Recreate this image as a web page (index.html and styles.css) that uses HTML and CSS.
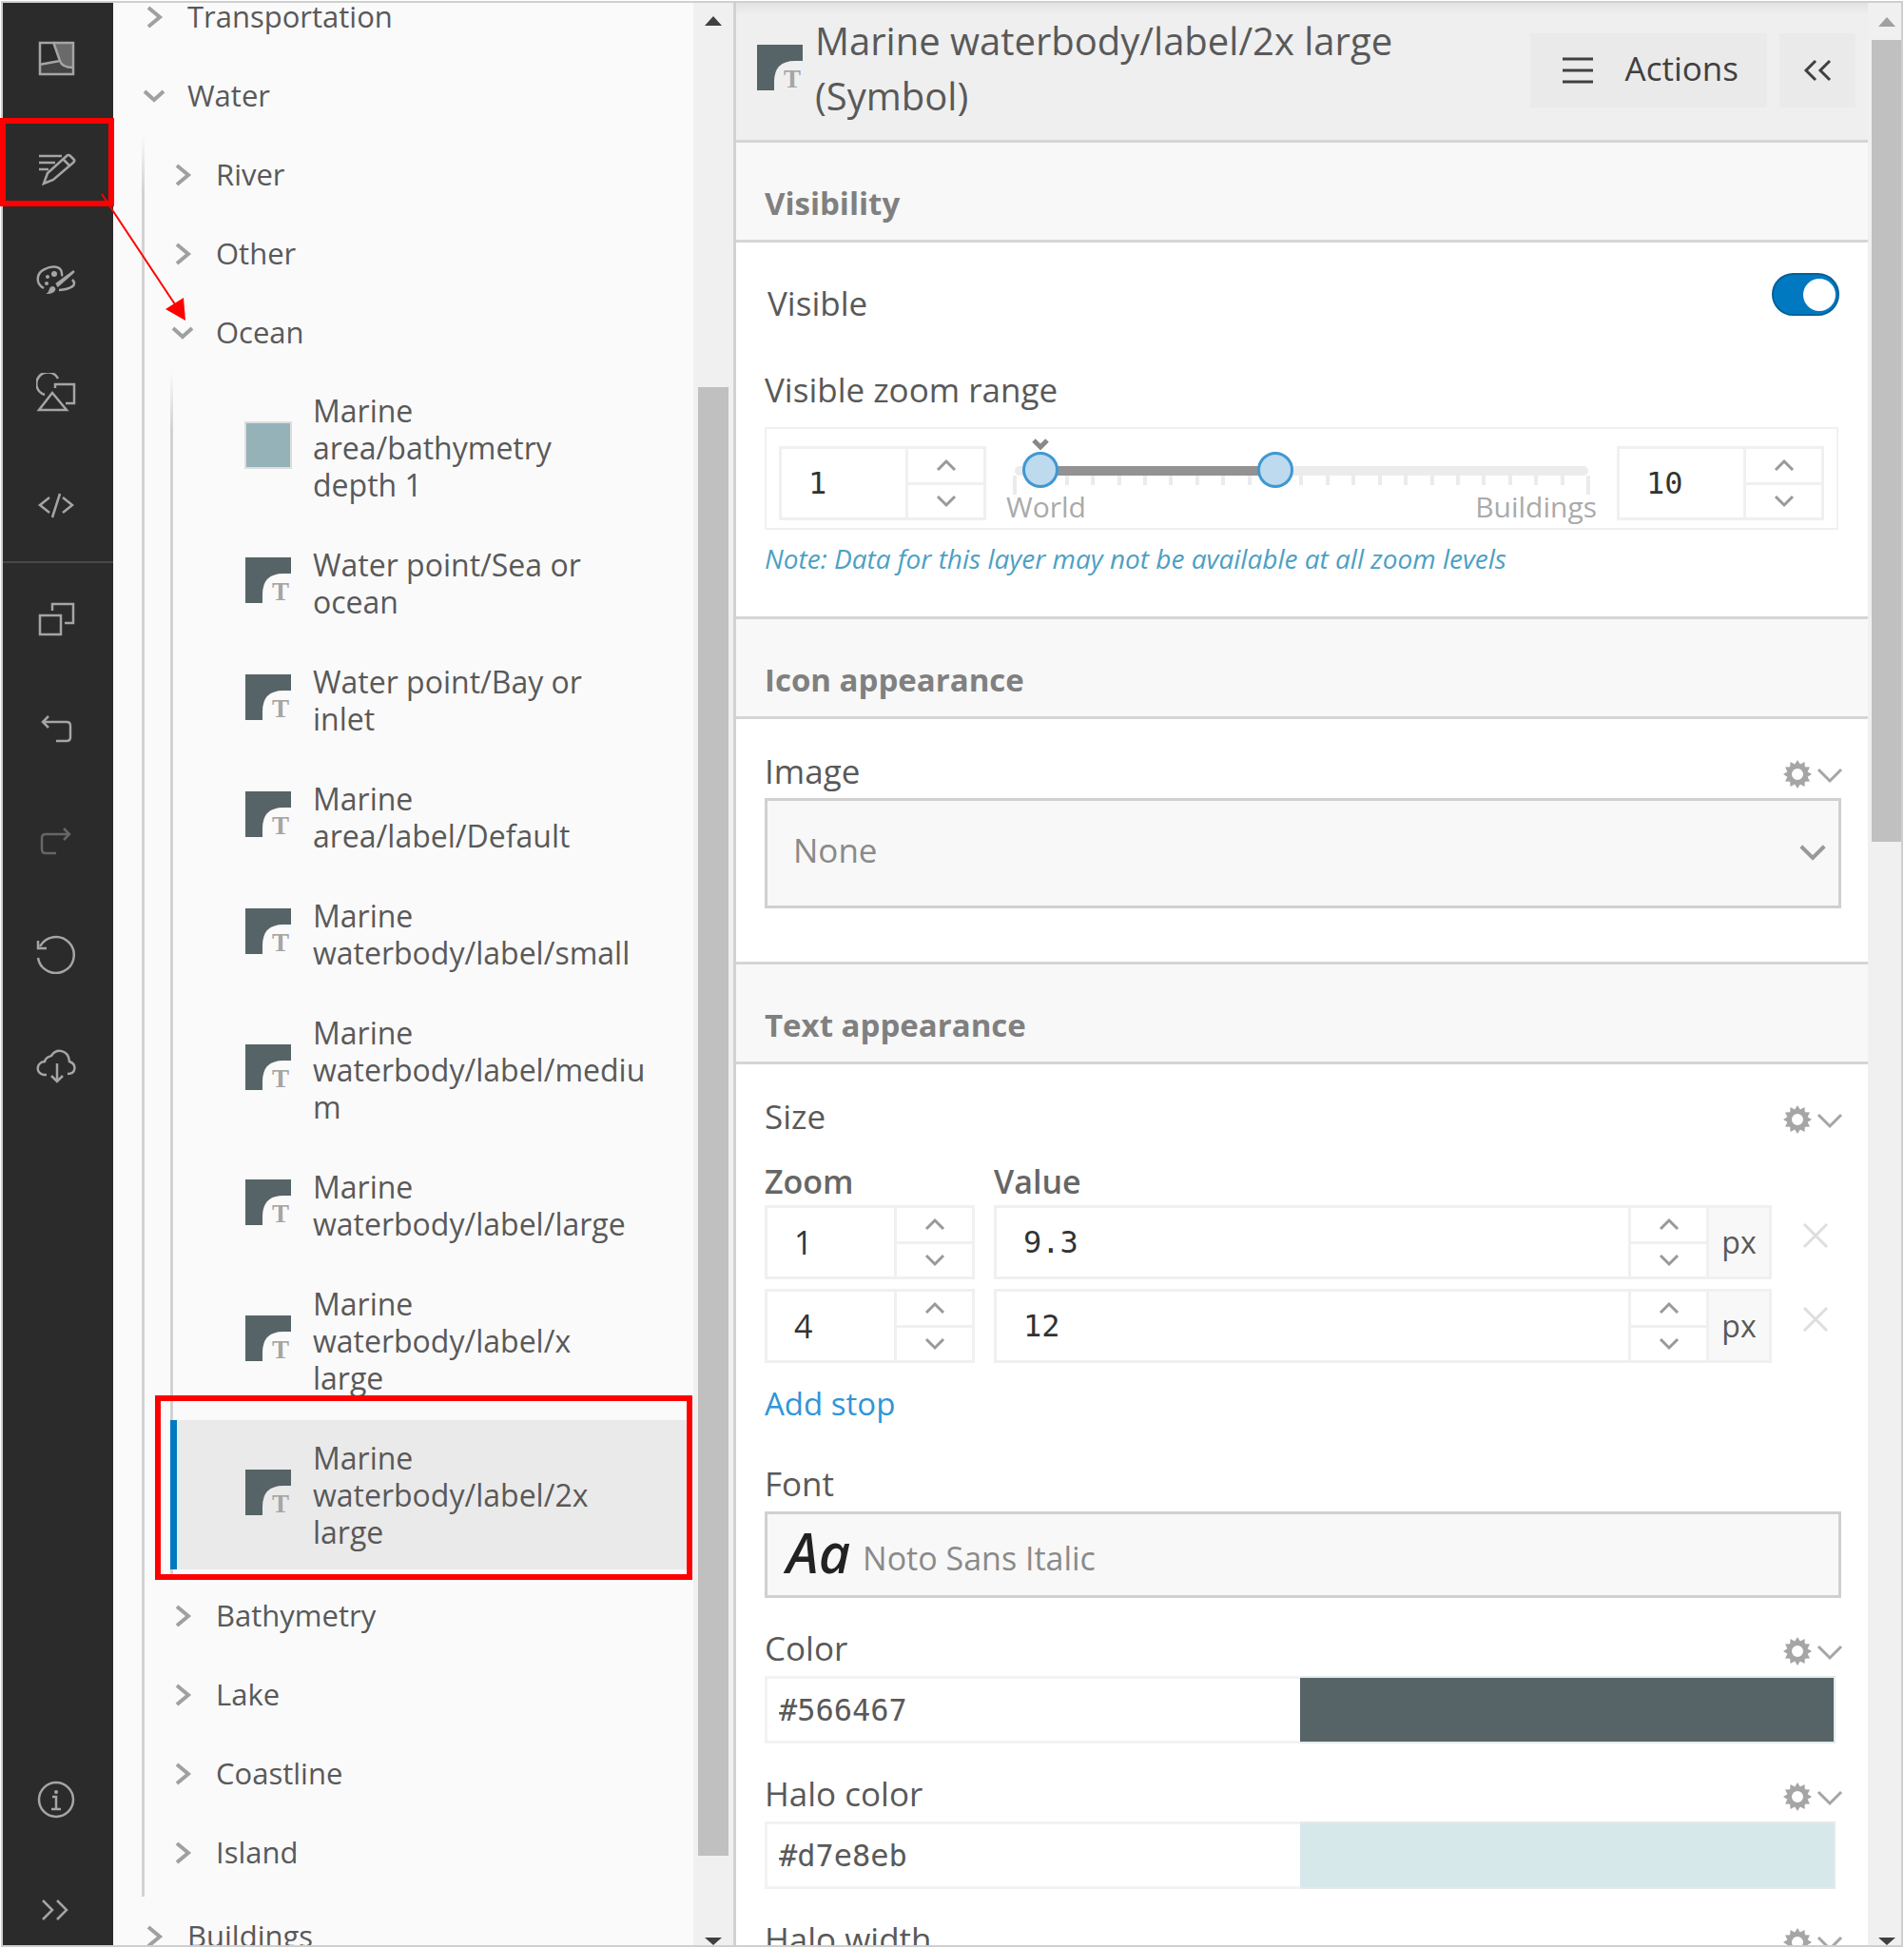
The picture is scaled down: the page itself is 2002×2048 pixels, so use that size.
FILE: index.html
```html
<!DOCTYPE html>
<html lang="en">
<head>
    <meta charset="UTF-8">
    <meta name="viewport" content="width=device-width, initial-scale=1.0">
    <title>Style Editor</title>
    <link rel="stylesheet" href="styles.css">
</head>
<body>

    <!-- Shared icons -->
    <svg class="sprite" aria-hidden="true">
        <symbol id="chev-right" viewBox="0 0 26 26"><path d="M7 3L19 13L7 23" fill="none" stroke="currentColor" stroke-width="4"/></symbol>
        <symbol id="chev-down" viewBox="0 0 26 26"><path d="M3 8L13 17L23 8" fill="none" stroke="currentColor" stroke-width="4"/></symbol>
        <symbol id="arrow-up" viewBox="0 0 22 14"><path d="M2 12L11 3L20 12" fill="none" stroke="currentColor" stroke-width="3"/></symbol>
        <symbol id="arrow-down" viewBox="0 0 22 14"><path d="M2 2L11 11L20 2" fill="none" stroke="currentColor" stroke-width="3"/></symbol>
        <symbol id="gear" viewBox="0 0 64 32">
            <path fill="currentColor" fill-rule="evenodd" d="M31 16L26.600 18.800L29 23.500L23.800 23.800L23.500 29L18.800 26.600L16 31L13.200 26.600L8.500 29L8.200 23.800L3 23.500L5.400 18.800L1 16L5.400 13.200L3 8.500L8.200 8.200L8.500 3L13.200 5.400L16 1L18.800 5.400L23.500 3L23.800 8.200L29 8.500L26.600 13.200ZM22 16A6 6 0 1 0 10 16A6 6 0 1 0 22 16Z"/>
            <path fill="none" stroke="currentColor" stroke-width="3" d="M38 11L50 23L62 11"/>
        </symbol>
        <symbol id="label-swatch" viewBox="0 0 50 50">
            <path fill="#566467" d="M1 1H49V18H41Q19 18 19 40V49H1Z"/>
            <text x="38" y="46" text-anchor="middle" class="swatch-letter">T</text>
        </symbol>
    </svg>

    <div class="app">
        <nav class="rail" aria-label="Editor tools">
            <button type="button" class="rail-btn" aria-label="Quick edit">
                <svg viewBox="0 0 42 42"><path d="M3 28L25 24L29 30L39 31V39H3Z" fill="#444" stroke="none"/><path d="M18 4H39V31L29 30L25 24Z" fill="#6a6a6a" stroke="none"/><path d="M3 28L25 24M18 4L25 24Q27 31 39 31"/><rect x="4" y="5" width="35" height="33"/></svg>
            </button>
            <button type="button" class="rail-btn" aria-label="Edit by layer">
                <svg viewBox="0 0 42 42"><path d="M3 8H27M3 15H20M3 22H13M8 37L12 26L32 8Q34 6 36 8L40 12Q41 13 39 15L18 33ZM28 11L35 18"/></svg>
            </button>
            <button type="button" class="rail-btn" aria-label="Colors">
                <svg viewBox="0 0 42 42"><path d="M8 29C-1 24 0 13 9 9C16 5 24 6 26 10C28 13 26 15 28 16M40 11L21 25M38 20C44 26 36 30 24 31M39 12L22 27"/><path d="M10 35C15 34 12 27 18 27C23 29 20 36 10 35Z" fill="#a5a5a5" stroke="none"/><g fill="#a5a5a5" stroke="none"><circle cx="12" cy="17" r="2"/><circle cx="19" cy="14" r="3"/><circle cx="11" cy="24" r="2"/></g></svg>
            </button>
            <button type="button" class="rail-btn" aria-label="Icons">
                <svg viewBox="0 0 42 42"><path d="M23 6A12 12 0 1 0 9 23M20 16V12H40V32H31M17 21L32 39H3Z"/></svg>
            </button>
            <button type="button" class="rail-btn" aria-label="Edit JSON">
                <svg viewBox="0 0 42 42"><path d="M14 13L4 21L14 29M28 13L38 21L28 29M25 9L17 34"/></svg>
            </button>
            <hr class="rail-line">
            <button type="button" class="rail-btn" aria-label="Duplicate">
                <svg viewBox="0 0 42 42"><path d="M4 19H26V39H4ZM17 14V7H39V27H30"/></svg>
            </button>
            <button type="button" class="rail-btn" aria-label="Undo">
                <svg viewBox="0 0 42 42"><path d="M13 7L7 13L13 19M7 13H32Q36 13 36 17V29Q36 33 32 33H21"/></svg>
            </button>
            <button type="button" class="rail-btn" aria-label="Redo" disabled>
                <svg viewBox="0 0 42 42"><path d="M29 7L35 13L29 19M35 13H10Q6 13 6 17V29Q6 33 10 33H21"/></svg>
            </button>
            <button type="button" class="rail-btn" aria-label="Reset">
                <svg viewBox="0 0 42 42"><path d="M2 25A19 19 0 1 0 4 13M2 7V15H11"/></svg>
            </button>
            <button type="button" class="rail-btn" aria-label="Save">
                <svg viewBox="0 0 42 42"><path d="M11 30H8C-1 28 0 17 9 16C10 11 14 11 16 10C21 2 34 3 35 16C43 19 42 29 33 29M22 18V36M16 31L22 37L28 31"/></svg>
            </button>
            <div class="rail-bottom">
                <button type="button" class="rail-btn" aria-label="Information">
                    <svg viewBox="0 0 42 42"><circle cx="21" cy="21" r="18"/><path d="M17 18H21V31M16 31H26"/><circle cx="21" cy="13" r="2" fill="#a5a5a5" stroke="none"/></svg>
                </button>
                <button type="button" class="rail-btn" aria-label="Expand">
                    <svg viewBox="0 0 42 42"><path d="M7 11L17 21L7 31M22 11L32 21L22 31"/></svg>
                </button>
            </div>
        </nav>

        <section class="tree-panel" aria-label="Layers">
            <div class="tree">
                <button type="button" class="row"><svg><use href="#chev-right"/></svg>Transportation</button>
                <button type="button" class="row"><svg><use href="#chev-down"/></svg>Water</button>
                <div class="group group-water">
                    <button type="button" class="row"><svg><use href="#chev-right"/></svg>River</button>
                    <button type="button" class="row"><svg><use href="#chev-right"/></svg>Other</button>
                    <button type="button" class="row"><svg><use href="#chev-down"/></svg>Ocean</button>
                    <div class="group group-ocean">
                        <button type="button" class="item"><span class="fill-swatch"></span><span class="item-name">Marine area/bathymetry depth&nbsp;1</span></button>
                        <button type="button" class="item"><svg class="swatch"><use href="#label-swatch"/></svg><span class="item-name">Water point/Sea or ocean</span></button>
                        <button type="button" class="item"><svg class="swatch"><use href="#label-swatch"/></svg><span class="item-name">Water point/Bay or inlet</span></button>
                        <button type="button" class="item"><svg class="swatch"><use href="#label-swatch"/></svg><span class="item-name">Marine area/label/Default</span></button>
                        <button type="button" class="item"><svg class="swatch"><use href="#label-swatch"/></svg><span class="item-name">Marine waterbody/label/small</span></button>
                        <button type="button" class="item"><svg class="swatch"><use href="#label-swatch"/></svg><span class="item-name">Marine waterbody/label/medium</span></button>
                        <button type="button" class="item"><svg class="swatch"><use href="#label-swatch"/></svg><span class="item-name">Marine waterbody/label/large</span></button>
                        <button type="button" class="item"><svg class="swatch"><use href="#label-swatch"/></svg><span class="item-name">Marine waterbody/label/x large</span></button>
                        <button type="button" class="item selected"><svg class="swatch"><use href="#label-swatch"/></svg><span class="item-name">Marine waterbody/label/2x large</span></button>
                    </div>
                    <button type="button" class="row"><svg><use href="#chev-right"/></svg>Bathymetry</button>
                    <button type="button" class="row"><svg><use href="#chev-right"/></svg>Lake</button>
                    <button type="button" class="row"><svg><use href="#chev-right"/></svg>Coastline</button>
                    <button type="button" class="row"><svg><use href="#chev-right"/></svg>Island</button>
                </div>
                <button type="button" class="row"><svg><use href="#chev-right"/></svg>Buildings</button>
            </div>
            <div class="scrollbar tree-scroll">
                <span class="scroll-up"></span>
                <span class="scroll-thumb"></span>
                <span class="scroll-down"></span>
            </div>
        </section>

        <main class="panel">
            <div class="panel-body">
                <header class="panel-header">
                    <svg class="swatch"><use href="#label-swatch"/></svg>
                    <h1>Marine waterbody/label/2x large (Symbol)</h1>
                    <button type="button" class="header-btn actions">
                        <svg width="32" height="30" viewBox="0 0 32 30"><path d="M0 3H32M0 15H32M0 27H32" stroke="currentColor" stroke-width="3"/></svg>
                        Actions
                    </button>
                    <button type="button" class="header-btn collapse" aria-label="Collapse">
                        <svg width="32" height="24" viewBox="0 0 32 24"><path d="M14 2L4 12L14 22M29 2L19 12L29 22" fill="none" stroke="currentColor" stroke-width="3"/></svg>
                    </button>
                </header>

                <h2>Visibility</h2>
                <div class="section">
                    <div class="toggle-row">
                        <label for="visible">Visible</label>
                        <input type="checkbox" id="visible" class="toggle" role="switch" checked>
                    </div>
                    <p class="range-title">Visible zoom range</p>
                    <div class="zoom-range">
                        <div class="stepper">
                            <input type="text" class="mono" value="1" aria-label="Minimum zoom">
                            <div class="step-btns">
                                <button type="button" aria-label="Increase"><svg><use href="#arrow-up"/></svg></button>
                                <button type="button" aria-label="Decrease"><svg><use href="#arrow-down"/></svg></button>
                            </div>
                        </div>
                        <div class="slider">
                            <div class="track">
                                <svg class="marker" viewBox="0 0 18 13"><path d="M2 2L9 9L16 2" fill="none" stroke="#888" stroke-width="5"/></svg>
                                <span class="track-fill"></span>
                                <input type="range" min="0" max="22" value="1" aria-label="Minimum zoom level">
                                <input type="range" min="0" max="22" value="10" aria-label="Maximum zoom level">
                            </div>
                            <div class="ticks">
                                <i></i><i></i><i></i><i></i><i></i><i></i><i></i><i></i><i></i><i></i><i></i><i></i>
                                <i></i><i></i><i></i><i></i><i></i><i></i><i></i><i></i><i></i><i></i><i></i>
                            </div>
                            <div class="slider-labels"><span>World</span><span>Buildings</span></div>
                        </div>
                        <div class="stepper">
                            <input type="text" class="mono" value="10" aria-label="Maximum zoom">
                            <div class="step-btns">
                                <button type="button" aria-label="Increase"><svg><use href="#arrow-up"/></svg></button>
                                <button type="button" aria-label="Decrease"><svg><use href="#arrow-down"/></svg></button>
                            </div>
                        </div>
                    </div>
                    <p class="note">Note: Data for this layer may not be available at all zoom levels</p>
                </div>

                <h2>Icon appearance</h2>
                <div class="section">
                    <div class="field-head">
                        <label for="image">Image</label>
                        <button type="button" class="gear-btn" aria-label="Image options"><svg><use href="#gear"/></svg></button>
                    </div>
                    <div class="select-wrap">
                        <select id="image">
                            <option>None</option>
                        </select>
                        <svg class="select-arrow"><use href="#arrow-down"/></svg>
                    </div>
                </div>

                <h2>Text appearance</h2>
                <div class="section">
                    <div class="field-head">
                        <span>Size</span>
                        <button type="button" class="gear-btn" aria-label="Size options"><svg><use href="#gear"/></svg></button>
                    </div>
                    <table class="stops">
                        <thead>
                            <tr><th class="col-zoom">Zoom</th><th>Value</th><th class="col-remove"></th></tr>
                        </thead>
                        <tbody>
                            <tr>
                                <td class="col-zoom">
                                    <div class="stepper">
                                        <input type="text" value="1" aria-label="Zoom of stop 1">
                                        <div class="step-btns">
                                            <button type="button" aria-label="Increase"><svg><use href="#arrow-up"/></svg></button>
                                            <button type="button" aria-label="Decrease"><svg><use href="#arrow-down"/></svg></button>
                                        </div>
                                    </div>
                                </td>
                                <td>
                                    <div class="stepper">
                                        <input type="text" class="mono" value="9.3" aria-label="Value of stop 1">
                                        <div class="step-btns">
                                            <button type="button" aria-label="Increase"><svg><use href="#arrow-up"/></svg></button>
                                            <button type="button" aria-label="Decrease"><svg><use href="#arrow-down"/></svg></button>
                                        </div>
                                        <span class="unit">px</span>
                                    </div>
                                </td>
                                <td class="col-remove"><button type="button" class="remove" aria-label="Remove stop 1"><svg viewBox="0 0 28 28"><path d="M2 2L26 26M26 2L2 26"/></svg></button></td>
                            </tr>
                            <tr>
                                <td class="col-zoom">
                                    <div class="stepper">
                                        <input type="text" value="4" aria-label="Zoom of stop 2">
                                        <div class="step-btns">
                                            <button type="button" aria-label="Increase"><svg><use href="#arrow-up"/></svg></button>
                                            <button type="button" aria-label="Decrease"><svg><use href="#arrow-down"/></svg></button>
                                        </div>
                                    </div>
                                </td>
                                <td>
                                    <div class="stepper">
                                        <input type="text" class="mono" value="12" aria-label="Value of stop 2">
                                        <div class="step-btns">
                                            <button type="button" aria-label="Increase"><svg><use href="#arrow-up"/></svg></button>
                                            <button type="button" aria-label="Decrease"><svg><use href="#arrow-down"/></svg></button>
                                        </div>
                                        <span class="unit">px</span>
                                    </div>
                                </td>
                                <td class="col-remove"><button type="button" class="remove" aria-label="Remove stop 2"><svg viewBox="0 0 28 28"><path d="M2 2L26 26M26 2L2 26"/></svg></button></td>
                            </tr>
                        </tbody>
                    </table>
                    <a href="#" class="add-stop">Add stop</a>

                    <div class="field">
                        <div class="field-head"><label for="font">Font</label></div>
                        <button type="button" id="font" class="font-btn"><span class="font-sample">Aa</span>Noto Sans Italic</button>
                    </div>

                    <div class="field">
                        <div class="field-head">
                            <label for="color">Color</label>
                            <button type="button" class="gear-btn" aria-label="Color options"><svg><use href="#gear"/></svg></button>
                        </div>
                        <div class="color-field">
                            <input type="text" id="color" value="#566467">
                            <button type="button" class="color-swatch text-color" aria-label="Pick color"></button>
                        </div>
                    </div>

                    <div class="field">
                        <div class="field-head">
                            <label for="halo">Halo color</label>
                            <button type="button" class="gear-btn" aria-label="Halo color options"><svg><use href="#gear"/></svg></button>
                        </div>
                        <div class="color-field">
                            <input type="text" id="halo" value="#d7e8eb">
                            <button type="button" class="color-swatch halo-color" aria-label="Pick halo color"></button>
                        </div>
                    </div>

                    <div class="field">
                        <div class="field-head">
                            <span>Halo width</span>
                            <button type="button" class="gear-btn" aria-label="Halo width options"><svg><use href="#gear"/></svg></button>
                        </div>
                    </div>
                </div>
            </div>
            <div class="scrollbar panel-scroll">
                <span class="scroll-up"></span>
                <span class="scroll-thumb"></span>
                <span class="scroll-down"></span>
            </div>
        </main>
    </div>

    <!-- Callouts on top of the editor -->
    <div class="callout callout-tool"></div>
    <div class="callout callout-layer"></div>
    <svg class="callout-arrow" width="100" height="140" viewBox="0 0 100 140"><path d="M7 4L84 120" stroke="#f00" stroke-width="2"/><path d="M95 137L74 125L93 113Z" fill="#f00"/></svg>

</body>
</html>
```
FILE: styles.css
```css
/* Basic Reset */
* {
    margin: 0;
    padding: 0;
    box-sizing: border-box;
}

body {
    position: relative;
    height: 100vh;
    padding: 1px;
    overflow: hidden;
    background-color: #fff;
    font-family: "Open Sans", "Noto Sans", sans-serif;
    font-size: 34px;
    line-height: 46px;
    color: #595959;
}

button, input, select {
    font: inherit;
    color: inherit;
    background: none;
    border: none;
    border-radius: 0;
}

button {
    cursor: pointer;
}

svg {
    display: block;
    flex: none;
}

.sprite {
    position: absolute;
    width: 0;
    height: 0;
}

.app {
    display: flex;
    height: 100%;
    border: 2px solid #cfcfcf;
    overflow: hidden;
}

/* Tool rail */
.rail {
    display: flex;
    flex-direction: column;
    flex: 0 0 116px;
    padding-right: 5px;
    background-color: #2b2b2b;
}

.rail-btn {
    display: flex;
    flex: none;
    align-items: center;
    justify-content: center;
    width: 100%;
    height: 118px;
}

.rail-btn:first-child {
    height: 115px;
}

.rail-btn svg {
    width: 42px;
    height: 42px;
    fill: none;
    stroke: #a5a5a5;
    stroke-width: 2.5;
}

.rail-btn:disabled svg {
    stroke: #666;
}

.rail-line {
    height: 2px;
    margin-right: -5px;
    margin-bottom: -2px;
    border: none;
    background-color: #484848;
}

.rail-bottom {
    margin-top: auto;
    margin-bottom: -22px;
}

/* Layer tree */
.tree-panel {
    display: flex;
    flex: 0 0 652px;
    background-color: #fafafa;
    overflow: hidden;
}

.tree {
    flex: 1;
    margin-top: -27px;
    padding-left: 30px;
    font-size: 31px;
    line-height: 39px;
}

.row {
    display: flex;
    align-items: center;
    gap: 22px;
    width: 100%;
    height: 83px;
    text-align: left;
}

.row svg {
    width: 26px;
    height: 26px;
    color: #a0a0a0;
}

.group {
    background: linear-gradient(#fafafa, #d2d2d2 60px) left top / 3px 100% no-repeat;
}

.group-water {
    padding-left: 30px;
    padding-bottom: 5px;
}

.group-ocean {
    padding-top: 1px;
    padding-bottom: 2px;
}

.item {
    display: flex;
    align-items: center;
    gap: 22px;
    width: calc(100% - 6px);
    margin-bottom: 5px;
    padding: 20px 42px 20px 78px;
    font-size: 32px;
    text-align: left;
}

.item.selected {
    padding-left: 71px;
    border-left: 7px solid #0079c1;
    background-color: #eaeaea;
}

.item-name {
    flex: 1;
    min-width: 0;
    overflow-wrap: anywhere;
}

.swatch {
    width: 50px;
    height: 50px;
}

.swatch-letter {
    font-family: "Liberation Serif", serif;
    font-size: 27px;
    font-weight: bold;
    fill: #a5a5a5;
}

.item .swatch, .fill-swatch {
    margin-bottom: 6px;
}

.fill-swatch {
    flex: none;
    width: 50px;
    height: 50px;
    border: 2px solid #ddd;
    background-color: #95b2b9;
}

/* Scrollbars */
.scrollbar {
    display: flex;
    flex-direction: column;
    align-items: center;
    flex: none;
    background-color: #f0f0f0;
}

.tree-scroll {
    width: 42px;
    padding-top: 14px;
}

.panel-scroll {
    width: 35px;
    padding-top: 15px;
    padding-left: 5px;
}

.scroll-up, .scroll-down {
    border: 9px solid transparent;
    border-top-width: 0;
    border-bottom: 10px solid #404040;
}

.scroll-down {
    margin-top: auto;
    border-top: 8px solid #404040;
    border-bottom-width: 0;
}

.panel-scroll .scroll-up {
    border-bottom-color: #a0a0a0;
}

.scroll-thumb {
    width: 32px;
    background-color: #c0c0c0;
}

.tree-scroll .scroll-thumb {
    height: 1544px;
    margin-top: 380px;
}

.panel-scroll .scroll-thumb {
    height: 843px;
    margin-top: 14px;
}

/* Properties panel */
.panel {
    display: flex;
    flex: 1;
    min-width: 0;
    border-left: 3px solid #d2d2d2;
    background-color: #fff;
    overflow: hidden;
}

.panel-body {
    flex: 1;
    min-width: 0;
}

.panel-header {
    display: flex;
    align-items: flex-start;
    height: 144px;
    padding: 11px 13px 0 21px;
    background: linear-gradient(#e2e2e2, #efefef 12px);
}

.panel-header .swatch {
    margin-top: 32px;
}

.panel-header h1 {
    flex: 1;
    margin-left: 12px;
    font-size: 40px;
    font-weight: 400;
    line-height: 58px;
}

.header-btn {
    display: flex;
    align-items: center;
    height: 78px;
    margin-top: 21px;
    background-color: #eaeaea;
    color: #404040;
}

.actions {
    gap: 34px;
    padding: 0 30px 4px 34px;
    margin-right: 13px;
    font-size: 35px;
}

.actions svg {
    margin-top: 4px;
}

.collapse {
    justify-content: center;
    width: 80px;
}

h2 {
    padding: 41px 30px 15px;
    border-top: 3px solid #d5d5d5;
    border-bottom: 3px solid #d5d5d5;
    background-color: #f8f8f8;
    font-size: 33px;
    font-weight: 700;
    line-height: 46px;
    color: #808080;
}

.section {
    padding: 32px 28px 56px 30px;
}

/* Visibility */
.toggle-row {
    display: flex;
    align-items: flex-start;
    justify-content: space-between;
    height: 100px;
    padding-left: 3px;
    padding-right: 2px;
}

.toggle-row label {
    margin-top: 9px;
}

.toggle-row, .range-title, .field-head {
    font-size: 35px;
}

.toggle {
    appearance: none;
    display: flex;
    justify-content: flex-end;
    width: 71px;
    height: 45px;
    padding: 4px 2px;
    border: 2px solid #00619b;
    border-radius: 23px;
    background-color: #0079c1;
}

.toggle::before {
    content: "";
    width: 34px;
    height: 34px;
    border-radius: 50%;
    background-color: #fff;
}

.zoom-range {
    display: flex;
    margin-top: 16px;
    margin-right: 3px;
    padding: 18px 13px 8px;
    border: 2px solid #f0f0f0;
}

.zoom-range .stepper {
    flex: none;
    width: 218px;
}

.stepper {
    display: flex;
    height: 78px;
    border: 3px solid #f0f0f0;
}

.stepper input {
    flex: 1;
    width: 100%;
    min-width: 0;
    padding-left: 28px;
    color: #333;
}

.stepper .mono, .color-field input {
    font-family: "DejaVu Sans Mono", monospace;
    font-size: 32px;
}

.step-btns {
    display: flex;
    flex-direction: column;
    flex: 0 0 82px;
    border-left: 3px solid #f0f0f0;
}

.step-btns button {
    display: flex;
    flex: 1;
    align-items: center;
    justify-content: center;
}

.step-btns button + button {
    border-top: 3px solid #f0f0f0;
}

.step-btns svg {
    width: 22px;
    height: 14px;
    color: #999;
}

.slider {
    flex: 1;
    min-width: 0;
    padding: 21px 22px 0;
}

.track {
    position: relative;
    height: 10px;
    margin: 0 8px;
    border-radius: 5px;
    background-color: #ececec;
}

.track-fill {
    position: absolute;
    left: 4.5%;
    width: 41%;
    height: 100%;
    background-color: #929292;
}

.marker {
    position: absolute;
    bottom: 26px;
    left: 4.5%;
    width: 18px;
    height: 13px;
    margin-left: -9px;
}

.track input {
    appearance: none;
    position: absolute;
    top: -15px;
    left: -19px;
    width: calc(100% + 38px);
    height: 38px;
    pointer-events: none;
}

.track input::-webkit-slider-thumb {
    appearance: none;
    width: 38px;
    height: 38px;
    border: 3px solid #3f98d3;
    border-radius: 50%;
    background-color: #bddaee;
    pointer-events: auto;
}

.ticks {
    display: flex;
    justify-content: space-between;
    height: 18px;
    margin: 0 6px;
}

.ticks i {
    width: 4px;
    height: 10px;
    background-color: #ebebeb;
}

.ticks i:first-child, .ticks i:last-child {
    height: 20px;
}

.slider-labels {
    display: flex;
    justify-content: space-between;
    margin: 0 -1px;
    font-size: 30px;
    line-height: 29px;
    color: #aaa;
}

.note {
    margin-top: 7px;
    margin-bottom: -18px;
    font-size: 28px;
    font-style: italic;
    color: #4d9fc4;
}

/* Fields */
.field {
    margin-top: 30px;
}

.add-stop + .field {
    margin-top: 38px;
}

.field-head {
    display: flex;
    align-items: center;
    justify-content: space-between;
    height: 46px;
    margin-bottom: 5px;
}

.field .field-head {
    margin-bottom: 6px;
}

.gear-btn {
    margin-right: -2px;
    color: #a5a5a5;
}

.gear-btn svg {
    width: 64px;
    height: 32px;
    margin-top: 6px;
}

.select-wrap {
    position: relative;
}

.select-wrap select {
    appearance: none;
    display: block;
    width: 100%;
    height: 116px;
    padding: 0 60px 6px 27px;
    border: 3px solid #d0d0d0;
    background-color: #f8f8f8;
    font-size: 35px;
    color: #8a8a8a;
}

.select-arrow {
    position: absolute;
    top: 48px;
    right: 15px;
    width: 30px;
    height: 19px;
    color: #999;
    pointer-events: none;
}

/* Stops table */
.stops {
    width: 100%;
    margin-top: 22px;
    border-collapse: collapse;
    table-layout: fixed;
}

.stops th {
    height: 48px;
    font-weight: 600;
    font-size: 34px;
    text-align: left;
    vertical-align: top;
    color: #666;
}

.stops td {
    padding-bottom: 10px;
    vertical-align: top;
}

.stops .col-zoom {
    width: 241px;
    padding-right: 20px;
}

.stops .col-remove {
    width: 73px;
}

.unit {
    flex: 0 0 66px;
    border-left: 3px solid #f0f0f0;
    background-color: #f8f8f8;
    font-size: 32px;
    line-height: 72px;
    text-align: center;
}

.remove {
    display: block;
    margin: 18px 0 0 32px;
}

.remove svg {
    width: 28px;
    height: 28px;
    stroke: #dedede;
    stroke-width: 3;
}

.add-stop {
    display: block;
    width: fit-content;
    margin-top: 10px;
    font-size: 33px;
    text-decoration: none;
    color: #2f95d8;
}

.font-btn {
    display: flex;
    align-items: center;
    gap: 13px;
    width: 100%;
    height: 91px;
    padding: 6px 20px 0;
    border: 3px solid #d0d0d0;
    background-color: #f8f8f8;
    color: #8a8a8a;
}

.font-sample {
    padding-bottom: 12px;
    font-family: "Noto Sans", sans-serif;
    font-size: 58px;
    font-style: italic;
    font-weight: 500;
    color: #222;
}

.color-field {
    display: flex;
    height: 71px;
    margin-right: 6px;
}

.color-field input {
    width: 50%;
    padding-left: 12px;
    border: 3px solid #f2f2f2;
    border-right: none;
}

.color-swatch {
    width: 50%;
    border: 2px solid #e4eaea;
    border-left: none;
}

.text-color {
    background-color: #566467;
}

.halo-color {
    background-color: #d7e8eb;
}

/* Callouts */
.callout {
    position: absolute;
    border: 6px solid #f00;
}

.callout-tool {
    top: 124px;
    left: 0;
    width: 120px;
    height: 93px;
}

.callout-layer {
    top: 1467px;
    left: 163px;
    width: 565px;
    height: 194px;
}

.callout-arrow {
    position: absolute;
    top: 200px;
    left: 100px;
}
```
